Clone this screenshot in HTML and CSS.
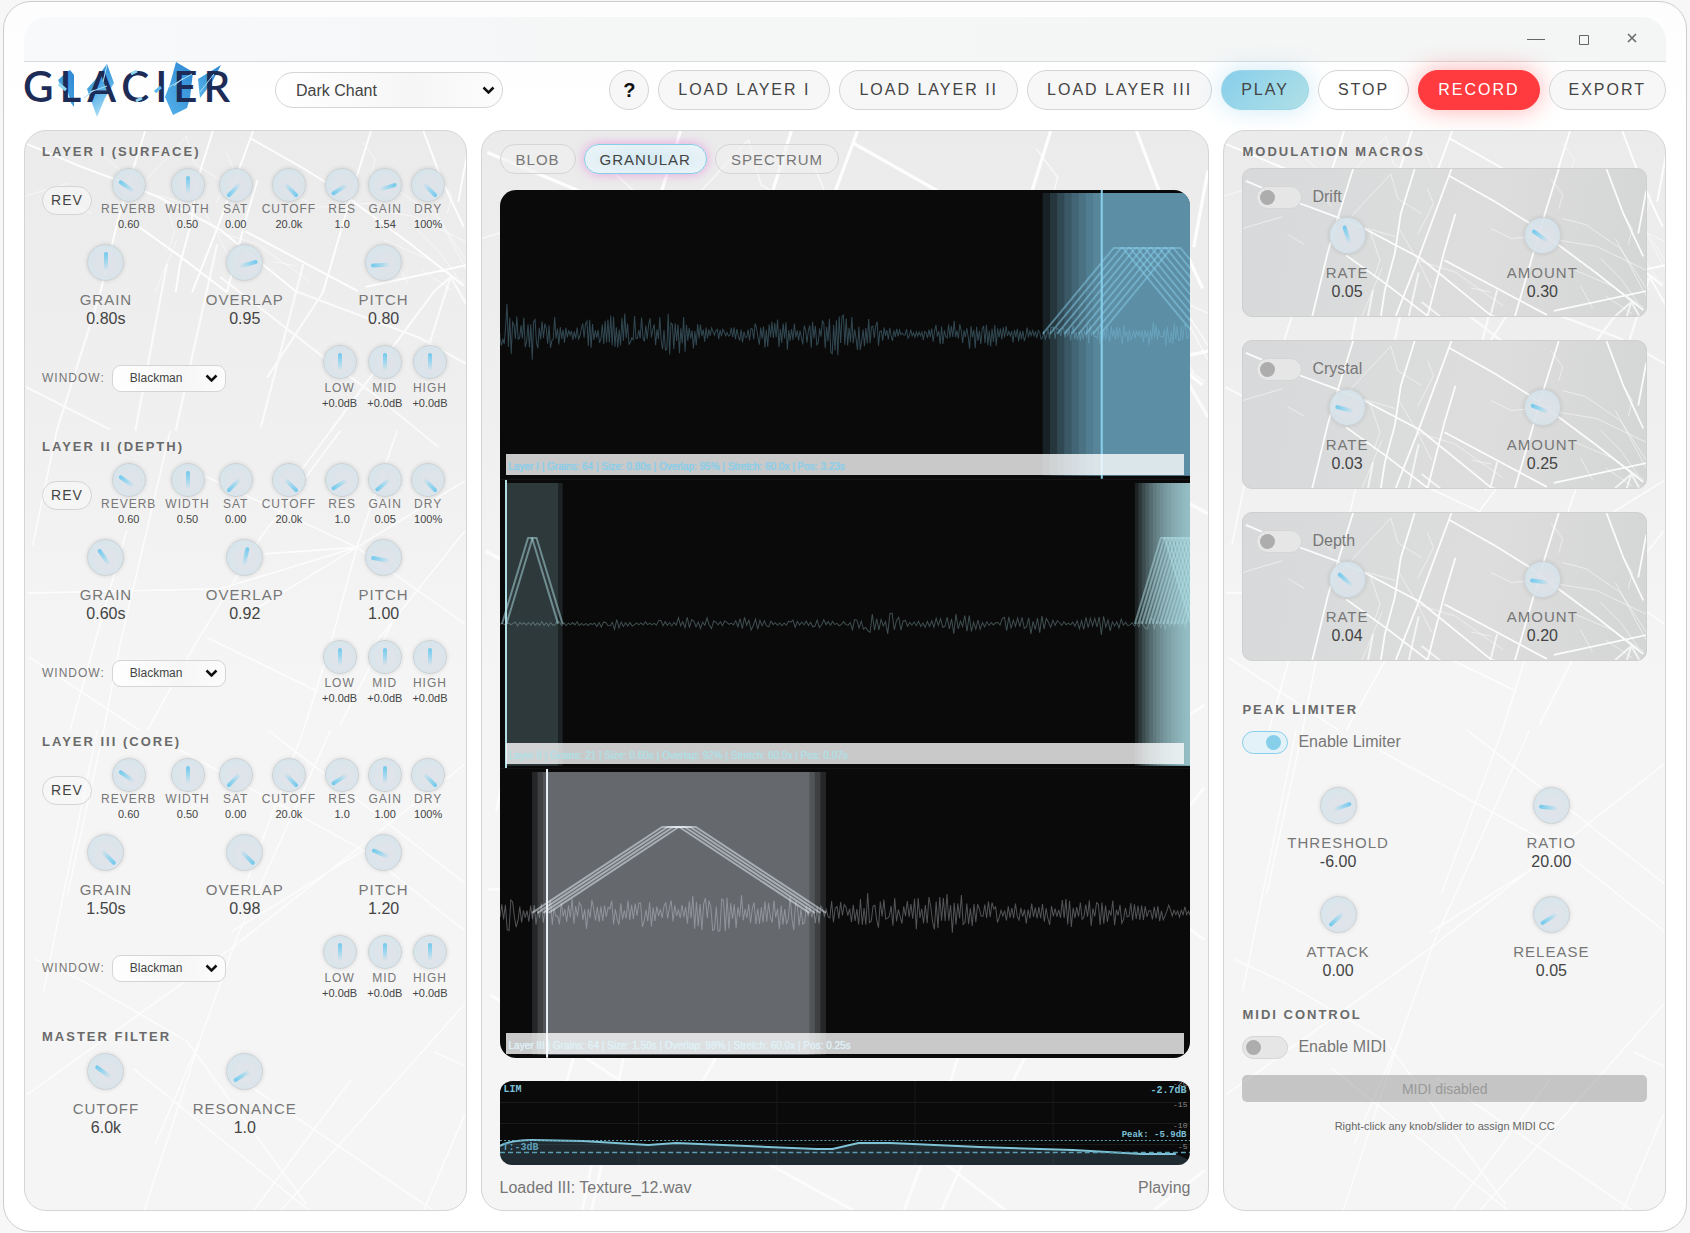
FILE: index.html
```html
<!DOCTYPE html>
<html lang="en">
<head>
<meta charset="utf-8">
<title>Glacier</title>
<meta name="viewport" content="width=device-width, initial-scale=1">
<link rel="stylesheet" href="styles.css">
</head>
<body>
<div class="window">
  <div class="titlebar">
    <button type="button" aria-label="Minimize"><svg width="20" height="14" viewBox="0 0 20 14"><path d="M1 7.500H19"/></svg></button>
    <button type="button" aria-label="Maximize"><svg width="20" height="14" viewBox="0 0 20 14"><path d="M5.500 3.500h9v9h-9z"/></svg></button>
    <button type="button" aria-label="Close"><svg width="20" height="14" viewBox="0 0 20 14"><path stroke-width="1.500" d="M6 2l8 8M14 2l-8 8"/></svg></button>
  </div>

  <header class="toolbar">
    <svg class="logo" width="206" height="56" viewBox="0 0 206 56" role="img" aria-label="Glacier">
      <defs>
        <linearGradient id="shard" x1="0" y1="0" x2="0.300" y2="1"><stop offset="0" stop-color="#2f86cc"/><stop offset="0.500" stop-color="#4aa6e2"/><stop offset="1" stop-color="#a5dcf6"/></linearGradient>
        <linearGradient id="shard2" x1="1" y1="0" x2="0" y2="1"><stop offset="0" stop-color="#2c86d2"/><stop offset="1" stop-color="#56b2ea"/></linearGradient>
      </defs>
      <path fill="url(#shard2)" d="M34 18 43 10 46 8 50 13V45L47 41 44 30 38 26Z"/>
      <path fill="url(#shard)" d="M83 2 90 21 81 36 73 55 63 27 71 18Z"/>
      <path fill="url(#shard2)" d="M152 0 169 10 166 36 163 46 149 53 141 35 146 22Z"/>
      <path fill="url(#shard2)" d="M174 17 197 3 187 22 176 36Z"/>
      <text class="logo-text" x="-1" y="40">GLACIER</text>
      <g fill="none" stroke-linecap="butt">
        <path stroke="#8fd6f3" stroke-width="3" d="M35 22 42 28M107 12 113 9M112 39 118 36"/>
        <path stroke="#5cb8ea" stroke-width="3" d="M131 30 137 25"/>
        <path stroke="#a9e0f8" stroke-width="1" d="M66 30 83 24M83 3 79 20M145 25 168 12M150 24 159 16M176 30 190 12M60 36 70 28"/>
      </g>
    </svg>
    <select class="preset" aria-label="Preset"><option>Dark Chant</option></select>
    <div class="actions">
      <button type="button" class="pill help">?</button>
      <button type="button" class="pill">LOAD LAYER I</button>
      <button type="button" class="pill">LOAD LAYER II</button>
      <button type="button" class="pill">LOAD LAYER III</button>
      <button type="button" class="pill play">PLAY</button>
      <button type="button" class="pill stop">STOP</button>
      <button type="button" class="pill record">RECORD</button>
      <button type="button" class="pill">EXPORT</button>
    </div>
  </header>

  <main class="panels">
    <div class="panel controls">
      <section class="layer">
        <h2>LAYER I (SURFACE)</h2>
        <div class="strip">
          <button type="button" class="rev">REV</button>
          <label class="dial small"><span class="knob" style="--turn:-55deg"><input type="range"></span><span class="name">REVERB</span><span class="value">0.60</span></label>
          <label class="dial small"><span class="knob" style="--turn:0deg"><input type="range"></span><span class="name">WIDTH</span><span class="value">0.50</span></label>
          <label class="dial small"><span class="knob" style="--turn:-135deg"><input type="range"></span><span class="name">SAT</span><span class="value">0.00</span></label>
          <label class="dial small"><span class="knob" style="--turn:135deg"><input type="range"></span><span class="name">CUTOFF</span><span class="value">20.0k</span></label>
          <label class="dial small"><span class="knob" style="--turn:-122deg"><input type="range"></span><span class="name">RES</span><span class="value">1.0</span></label>
          <label class="dial small"><span class="knob" style="--turn:73deg"><input type="range"></span><span class="name">GAIN</span><span class="value">1.54</span></label>
          <label class="dial small"><span class="knob" style="--turn:135deg"><input type="range"></span><span class="name">DRY</span><span class="value">100%</span></label>
        </div>
        <div class="trio">
          <label class="dial"><span class="knob" style="--turn:0deg"><input type="range"></span><span class="name">GRAIN</span><span class="value">0.80s</span></label>
          <label class="dial"><span class="knob" style="--turn:74deg"><input type="range"></span><span class="name">OVERLAP</span><span class="value">0.95</span></label>
          <label class="dial"><span class="knob" style="--turn:-92deg"><input type="range"></span><span class="name">PITCH</span><span class="value">0.80</span></label>
        </div>
        <div class="shape">
          <label class="caption" for="win1">WINDOW:</label>
          <select id="win1" class="mini"><option>Blackman</option></select>
          <div class="eq">
            <label class="dial small"><span class="knob" style="--turn:0deg"><input type="range"></span><span class="name">LOW</span><span class="value">+0.0dB</span></label>
            <label class="dial small"><span class="knob" style="--turn:0deg"><input type="range"></span><span class="name">MID</span><span class="value">+0.0dB</span></label>
            <label class="dial small"><span class="knob" style="--turn:0deg"><input type="range"></span><span class="name">HIGH</span><span class="value">+0.0dB</span></label>
          </div>
        </div>
      </section>

      <section class="layer">
        <h2>LAYER II (DEPTH)</h2>
        <div class="strip">
          <button type="button" class="rev">REV</button>
          <label class="dial small"><span class="knob" style="--turn:-55deg"><input type="range"></span><span class="name">REVERB</span><span class="value">0.60</span></label>
          <label class="dial small"><span class="knob" style="--turn:0deg"><input type="range"></span><span class="name">WIDTH</span><span class="value">0.50</span></label>
          <label class="dial small"><span class="knob" style="--turn:-135deg"><input type="range"></span><span class="name">SAT</span><span class="value">0.00</span></label>
          <label class="dial small"><span class="knob" style="--turn:135deg"><input type="range"></span><span class="name">CUTOFF</span><span class="value">20.0k</span></label>
          <label class="dial small"><span class="knob" style="--turn:-122deg"><input type="range"></span><span class="name">RES</span><span class="value">1.0</span></label>
          <label class="dial small"><span class="knob" style="--turn:-130deg"><input type="range"></span><span class="name">GAIN</span><span class="value">0.05</span></label>
          <label class="dial small"><span class="knob" style="--turn:135deg"><input type="range"></span><span class="name">DRY</span><span class="value">100%</span></label>
        </div>
        <div class="trio">
          <label class="dial"><span class="knob" style="--turn:-35deg"><input type="range"></span><span class="name">GRAIN</span><span class="value">0.60s</span></label>
          <label class="dial"><span class="knob" style="--turn:12deg"><input type="range"></span><span class="name">OVERLAP</span><span class="value">0.92</span></label>
          <label class="dial"><span class="knob" style="--turn:-80deg"><input type="range"></span><span class="name">PITCH</span><span class="value">1.00</span></label>
        </div>
        <div class="shape">
          <label class="caption" for="win2">WINDOW:</label>
          <select id="win2" class="mini"><option>Blackman</option></select>
          <div class="eq">
            <label class="dial small"><span class="knob" style="--turn:0deg"><input type="range"></span><span class="name">LOW</span><span class="value">+0.0dB</span></label>
            <label class="dial small"><span class="knob" style="--turn:0deg"><input type="range"></span><span class="name">MID</span><span class="value">+0.0dB</span></label>
            <label class="dial small"><span class="knob" style="--turn:0deg"><input type="range"></span><span class="name">HIGH</span><span class="value">+0.0dB</span></label>
          </div>
        </div>
      </section>

      <section class="layer">
        <h2>LAYER III (CORE)</h2>
        <div class="strip">
          <button type="button" class="rev">REV</button>
          <label class="dial small"><span class="knob" style="--turn:-55deg"><input type="range"></span><span class="name">REVERB</span><span class="value">0.60</span></label>
          <label class="dial small"><span class="knob" style="--turn:0deg"><input type="range"></span><span class="name">WIDTH</span><span class="value">0.50</span></label>
          <label class="dial small"><span class="knob" style="--turn:-135deg"><input type="range"></span><span class="name">SAT</span><span class="value">0.00</span></label>
          <label class="dial small"><span class="knob" style="--turn:135deg"><input type="range"></span><span class="name">CUTOFF</span><span class="value">20.0k</span></label>
          <label class="dial small"><span class="knob" style="--turn:-122deg"><input type="range"></span><span class="name">RES</span><span class="value">1.0</span></label>
          <label class="dial small"><span class="knob" style="--turn:0deg"><input type="range"></span><span class="name">GAIN</span><span class="value">1.00</span></label>
          <label class="dial small"><span class="knob" style="--turn:135deg"><input type="range"></span><span class="name">DRY</span><span class="value">100%</span></label>
        </div>
        <div class="trio">
          <label class="dial"><span class="knob" style="--turn:135deg"><input type="range"></span><span class="name">GRAIN</span><span class="value">1.50s</span></label>
          <label class="dial"><span class="knob" style="--turn:135deg"><input type="range"></span><span class="name">OVERLAP</span><span class="value">0.98</span></label>
          <label class="dial"><span class="knob" style="--turn:-67deg"><input type="range"></span><span class="name">PITCH</span><span class="value">1.20</span></label>
        </div>
        <div class="shape">
          <label class="caption" for="win3">WINDOW:</label>
          <select id="win3" class="mini"><option>Blackman</option></select>
          <div class="eq">
            <label class="dial small"><span class="knob" style="--turn:0deg"><input type="range"></span><span class="name">LOW</span><span class="value">+0.0dB</span></label>
            <label class="dial small"><span class="knob" style="--turn:0deg"><input type="range"></span><span class="name">MID</span><span class="value">+0.0dB</span></label>
            <label class="dial small"><span class="knob" style="--turn:0deg"><input type="range"></span><span class="name">HIGH</span><span class="value">+0.0dB</span></label>
          </div>
        </div>
      </section>

      <section class="master">
        <h2>MASTER FILTER</h2>
        <div class="trio">
          <label class="dial"><span class="knob" style="--turn:-53deg"><input type="range"></span><span class="name">CUTOFF</span><span class="value">6.0k</span></label>
          <label class="dial"><span class="knob" style="--turn:-122deg"><input type="range"></span><span class="name">RESONANCE</span><span class="value">1.0</span></label>
        </div>
      </section>
    </div>

    <div class="panel stage">
      <nav class="tabs" aria-label="View">
        <button type="button">BLOB</button>
        <button type="button" class="active">GRANULAR</button>
        <button type="button">SPECTRUM</button>
      </nav>
      <div class="viewer">
        <div class="lane sky">
          <svg viewBox="0 0 690 289" preserveAspectRatio="none" data-lane="0"></svg>
          <p>Layer I | Grains: 64 | Size: 0.80s | Overlap: 95% | Stretch: 60.0x | Pos: 3.23s</p>
        </div>
        <div class="lane powder">
          <svg viewBox="0 0 690 289" preserveAspectRatio="none" data-lane="1"></svg>
          <p>Layer II | Grains: 21 | Size: 0.60s | Overlap: 92% | Stretch: 60.0x | Pos: 0.07s</p>
        </div>
        <div class="lane frost">
          <svg viewBox="0 0 690 289" preserveAspectRatio="none" data-lane="2"></svg>
          <p>Layer III | Grains: 64 | Size: 1.50s | Overlap: 98% | Stretch: 60.0x | Pos: 0.25s</p>
        </div>
      </div>
      <div class="meter">
        <svg viewBox="0 0 690 84" preserveAspectRatio="none">
          <g stroke="#191919"><path d="M138.500 0V84M276.500 0V84M414.500 0V84M552.500 0V84M0 21.500H690M0 42.500H690M0 63.500H690"/></g>
          <path fill="#87ceeb" fill-opacity="0.170" d="M0 65Q10 59 32 59L83 60 148 64 176 62 316 68H332L358 62 390 62 479 66 572 69 641 73 675 73 690 80V84H0Z"/>
          <path fill="none" stroke="#7fc4d6" stroke-width="2" d="M0 65Q10 59 32 59L83 60 148 64 176 62 316 68H332L358 62 390 62 479 66 572 69 641 73 675 73"/>
          <path stroke="#5fa3bb" stroke-dasharray="2 2" d="M0 59.500H690"/>
          <path stroke="#5b9db5" stroke-width="1.500" stroke-dasharray="5 3" d="M0 71.500H690"/>
        </svg>
        <span class="tag lim">LIM</span>
        <span class="tag gain">-2.7dB</span>
        <span class="tag peak">Peak: -5.9dB</span>
        <span class="tag thr">T:-3dB</span>
        <div class="scale"><span>-20</span><span>-15</span><span>-10</span><span>-5</span></div>
      </div>
      <footer class="status"><span>Loaded III: Texture_12.wav</span><span>Playing</span></footer>
    </div>

    <div class="panel side">
      <section class="macros">
        <h2>MODULATION MACROS</h2>
        <div class="card">
          <label class="switch"><input type="checkbox">Drift</label>
          <div class="pair">
            <label class="dial"><span class="knob" style="--turn:-18deg"><input type="range"></span><span class="name">RATE</span><span class="value">0.05</span></label>
            <label class="dial"><span class="knob" style="--turn:-55deg"><input type="range"></span><span class="name">AMOUNT</span><span class="value">0.30</span></label>
          </div>
        </div>
        <div class="card">
          <label class="switch"><input type="checkbox">Crystal</label>
          <div class="pair">
            <label class="dial"><span class="knob" style="--turn:-75deg"><input type="range"></span><span class="name">RATE</span><span class="value">0.03</span></label>
            <label class="dial"><span class="knob" style="--turn:-68deg"><input type="range"></span><span class="name">AMOUNT</span><span class="value">0.25</span></label>
          </div>
        </div>
        <div class="card">
          <label class="switch"><input type="checkbox">Depth</label>
          <div class="pair">
            <label class="dial"><span class="knob" style="--turn:-48deg"><input type="range"></span><span class="name">RATE</span><span class="value">0.04</span></label>
            <label class="dial"><span class="knob" style="--turn:-82deg"><input type="range"></span><span class="name">AMOUNT</span><span class="value">0.20</span></label>
          </div>
        </div>
      </section>
      <section class="limiter">
        <h2>PEAK LIMITER</h2>
        <label class="switch"><input type="checkbox" checked>Enable Limiter</label>
        <div class="pair wide">
          <label class="dial"><span class="knob" style="--turn:70deg"><input type="range"></span><span class="name">THRESHOLD</span><span class="value">-6.00</span></label>
          <label class="dial"><span class="knob" style="--turn:-83deg"><input type="range"></span><span class="name">RATIO</span><span class="value">20.00</span></label>
          <label class="dial"><span class="knob" style="--turn:-133deg"><input type="range"></span><span class="name">ATTACK</span><span class="value">0.00</span></label>
          <label class="dial"><span class="knob" style="--turn:-122deg"><input type="range"></span><span class="name">RELEASE</span><span class="value">0.05</span></label>
        </div>
      </section>
      <section class="midi">
        <h2>MIDI CONTROL</h2>
        <label class="switch"><input type="checkbox">Enable MIDI</label>
        <button type="button" class="midi-state" disabled>MIDI disabled</button>
        <p class="hint">Right-click any knob/slider to assign MIDI CC</p>
      </section>
    </div>
  </main>
</div>
<script src="script.js"></script>
</body>
</html>
```
FILE: styles.css
```css
:root {
  --line: #d3d5d6;
  --ink: #444;
  --soft: #777;
  --sky: #87ceeb;
  --chevron: url("data:image/svg+xml,%3Csvg xmlns='http://www.w3.org/2000/svg' width='13' height='8' viewBox='0 0 13 8'%3E%3Cpath d='M1.500 1.500 6.500 6.500 11.500 1.500' fill='none' stroke='%23111' stroke-width='2.500'/%3E%3C/svg%3E");
  --ice: url("data:image/svg+xml,%3Csvg xmlns='http://www.w3.org/2000/svg' viewBox='0 0 406 990' fill='none' stroke='%23fff'%3E%3Cg stroke-width='1.800' stroke-opacity='.9'%3E%3Cpath d='M3 12 53 33 96 49 126 62 179 90 249 147M111 0 96 48 86 82 70 148M173 0 159 45 153 85 143 122 139 148M210 0 176 92 154 148M208 7 254 33 286 53 356 105 403 142M318 0 304 45 274 148M366 0 383 45 403 88M406 22 398 65M214 45 203 82 186 148M104 87 143 115 186 148M203 92 306 147M313 143 406 123'/%3E%3C/g%3E%3Cg stroke-width='.8' stroke-opacity='.65'%3E%3Cpath d='M149 5 109 48M319 72 356 78 406 102M119 58 153 68M140 100 120 148M149 5 156 30 180 45M186 20 192 35 176 66M70 20 90 38M0 60 40 48M45 66 62 76M250 60 270 70 320 66M322 50 345 56 380 80 406 120M360 90 380 110 398 135M330 100 372 118 404 140M128 62 138 92 132 110M156 58 176 92 190 120M176 92 214 104 262 138M230 120 250 124M310 10 322 26 318 40M383 45 392 60 388 76M375 70 406 128M365 128 392 146M340 118 352 140'/%3E%3C/g%3E%3Cg stroke-width='2' stroke-opacity='.7'%3E%3Cpath d='M70 148 30 275M131 122 102 275M177 104 139 275M256 122 217 272M391 134 376 147 281 275M180 134 275 208 320 241M249 147 363 190 406 214M2 235 79 274M391 134 370 200M274 148 223 226M391 134 406 160'/%3E%3C/g%3E%3Cg stroke-width='1.500' stroke-opacity='.75'%3E%3Cpath d='M143 306 305 382 404 452M342 275 305 382 281 471 256 550M404 321 305 382 180 420 3 424M290 275 217 373 155 474 113 550M134 275 88 471 73 550M94 367 42 550M5 483 106 550M168 465 269 514M404 367 321 471M320 241 380 290M281 275 240 330M30 275 8 380M305 382 220 388M305 382 210 440M343 440 290 545'/%3E%3C/g%3E%3Cg stroke-width='1.500' stroke-opacity='.7'%3E%3Cpath d='M143 568 311 660 404 734M404 581 195 746 3 884M281 550 195 740 162 832 110 991M10 760 54 780 149 835 259 985M100 860 262 991M195 868 376 991M404 801 235 991M404 902 366 991M67 550 18 789M224 550 340 640 404 690M256 550 200 700M311 660 190 735M162 832 120 930M376 845 404 858M300 870 210 991M73 550 40 700'/%3E%3C/g%3E%3C/svg%3E");
}

* { box-sizing: border-box; }

body {
  margin: 0;
  padding: 1px 3px;
  min-height: 100vh;
  display: flex;
  background: #f7f7f7;
  color: var(--ink);
  font-family: "Liberation Sans", Arial, sans-serif;
  font-size: 16px;
}

button, select, input { font: inherit; color: inherit; margin: 0; }
h2, p { margin: 0; }

.window {
  flex: 1;
  display: flex;
  flex-direction: column;
  padding: 15px 20px 20px;
  border: 1px solid #cdcdcd;
  border-radius: 28px;
  background: linear-gradient(#fdfdfd, #fff 120px);
}

.titlebar {
  display: flex;
  justify-content: flex-end;
  height: 45px;
  padding-right: 10px;
  border-bottom: 1px solid #d8dbdc;
  border-radius: 24px 24px 0 0;
  background: linear-gradient(90deg, #f7f9fb, #f5f6f6 40%, #f4f5f5);
}
.titlebar button {
  display: grid;
  place-items: center;
  width: 48px;
  padding: 0;
  border: 0;
  background: none;
}
.titlebar svg { fill: none; stroke: #666; }

.toolbar {
  display: flex;
  align-items: center;
  gap: 45px;
  padding-bottom: 12px;
}
.logo { flex: none; overflow: visible; }
.logo-text {
  font-family: Lato, sans-serif;
  font-weight: 600;
  font-size: 42px;
  letter-spacing: 6px;
  fill: #1d2b57;
}

select {
  appearance: none;
  border: 1px solid var(--line);
  background: var(--chevron) right 7px center no-repeat, linear-gradient(90deg, #fff, #f6f6f6 60%, #fcfcfc);
}
.preset {
  width: 228px;
  height: 36px;
  padding: 0 20px;
  border-radius: 18px;
}

.actions { display: flex; gap: 9px; margin-left: auto; }
.pill {
  height: 40px;
  padding: 0 19px;
  border: 1px solid var(--line);
  border-radius: 20px;
  background: #f7f7f7;
  letter-spacing: 2px;
  white-space: nowrap;
}
.help {
  width: 40px;
  padding: 0;
  font-size: 20px;
  font-weight: 700;
  letter-spacing: 0;
  color: #111;
}
.play {
  border-color: #9dd6e8;
  background: linear-gradient(135deg, #87ceeb, #b0e0e6);
  box-shadow: 0 0 24px rgba(135, 206, 235, 0.4);
}
.stop { background: #fff; }
.record {
  border-color: #ff3b40;
  background: #ff3b40;
  color: #fff;
  box-shadow: 0 0 24px rgba(255, 59, 64, 0.4);
}

.panels {
  flex: 1;
  display: grid;
  grid-template-columns: 17fr 28fr 17fr;
  gap: 14px;
}
.panel {
  min-width: 0;
  padding: 13px 18px 12px;
  border: 1px solid var(--line);
  border-radius: 22px;
  background: var(--ice) top / cover, linear-gradient(#ebebeb, #f0f0f0 30%, #f5f5f5 50%);
}
.controls { padding-left: 17px; }

h2 {
  font-size: 13px;
  line-height: 15px;
  letter-spacing: 2px;
  color: #6a6a6a;
  white-space: nowrap;
}

/* Rotary controls */
.dial {
  display: flex;
  flex-direction: column;
  align-items: center;
}
.knob {
  position: relative;
  width: 37px;
  height: 37px;
  margin-bottom: 9px;
  border: 1px solid #cdd1d4;
  border-radius: 50%;
  background: radial-gradient(circle at 55% 55%, rgba(221, 226, 233, 0.9) 30%, rgba(206, 228, 236, 0.9));
  box-shadow: 0 0 4px rgba(0, 0, 0, 0.12);
}
.knob::after {
  content: "";
  position: absolute;
  left: 16px;
  top: 7px;
  width: 4px;
  height: 19px;
  border-radius: 2px;
  background: linear-gradient(#72c8ec, #9ad6ee 45%, rgba(176, 224, 240, 0));
  transform: rotate(var(--turn));
  transform-origin: 50% 13px;
}
.knob input {
  position: absolute;
  inset: 0;
  width: 100%;
  height: 100%;
  opacity: 0;
}
.name { font-size: 15px; line-height: 19px; letter-spacing: 1px; color: var(--soft); }
.value { line-height: 20px; }

.small .knob { width: 34px; height: 34px; margin-bottom: 0; }
.small .knob::after { left: 14px; height: 18px; transform-origin: 50% 12px; }
.small .name, .caption { font-size: 12px; line-height: 15px; letter-spacing: 1px; color: var(--soft); }
.small .value { font-size: 11px; line-height: 15px; }

.layer { margin-bottom: 28px; }
.strip { display: flex; align-items: center; gap: 9px; margin-top: 9px; }
.rev {
  width: 50px;
  height: 29px;
  padding: 0;
  border: 1px solid var(--line);
  border-radius: 15px;
  background: rgba(250, 250, 250, 0.5);
  font-size: 14px;
  letter-spacing: 1px;
}
.trio {
  display: grid;
  grid-template-columns: repeat(3, 1fr);
  column-gap: 11px;
  margin-top: 12px;
}
.master .trio { margin-top: 9px; }
.shape { display: flex; align-items: center; margin-top: 16px; }
.mini {
  width: 114px;
  height: 27px;
  margin-left: 7px;
  padding: 0 17px;
  border-radius: 9px;
  font-size: 12px;
}
.eq { display: flex; gap: 10px; margin-left: auto; }
.eq .knob { margin-bottom: 2px; }

/* Centre stage */
.stage { display: flex; flex-direction: column; }
.tabs { display: flex; gap: 8px; }
.tabs button {
  height: 30px;
  padding: 0 15px;
  border: 1px solid var(--line);
  border-radius: 15px;
  background: rgba(240, 240, 240, 0.6);
  font-size: 15px;
  letter-spacing: 1px;
  color: var(--soft);
}
.tabs .active {
  border-color: var(--sky);
  background: radial-gradient(#d3eaf2, #eef5f8);
  box-shadow: 0 0 11px rgba(226, 130, 220, 0.7);
  color: var(--ink);
}

.viewer {
  flex: 1;
  display: flex;
  flex-direction: column;
  min-height: 600px;
  margin-top: 16px;
  border-radius: 16px;
  overflow: hidden;
  background: #0a0a0a;
}
.lane { position: relative; flex: 1; border-bottom: 1px solid #151515; }
.lane:last-child { border-bottom: 0; }
.lane svg { position: absolute; width: 100%; height: 100%; }
.lane path { fill: none; vector-effect: non-scaling-stroke; }
.lane .band { fill: var(--tone); fill-opacity: 0.12; }
.lane .wave { stroke: var(--tone); stroke-opacity: 0.32; }
.lane .grain { stroke: var(--tone); stroke-opacity: 0.5; stroke-width: 2px; }
.lane .head { stroke: var(--tone); stroke-width: 2px; }
.lane p {
  position: absolute;
  left: 6px;
  right: 6px;
  bottom: 4px;
  height: 21px;
  padding-left: 3px;
  background: rgba(255, 255, 255, 0.78);
  font-size: 10px;
  line-height: 25px;
  color: var(--tone);
  text-shadow: 0 0 1px;
  white-space: nowrap;
}
.sky { --tone: #87ceeb; }
.powder { --tone: #b0e0e6; }
.frost { --tone: #ecf4fc; }
.frost p { color: #dff2f8; }

.meter {
  position: relative;
  height: 84px;
  margin-top: 23px;
  border-radius: 12px;
  overflow: hidden;
  background: #0a0a0a;
  font-family: "Liberation Mono", monospace;
}
.meter svg { position: absolute; width: 100%; height: 100%; }
.tag {
  position: absolute;
  font-size: 10px;
  line-height: 12px;
  font-weight: 700;
  color: #7cc0d8;
}
.lim { left: 4px; top: 3px; }
.gain { right: 4px; top: 4px; }
.peak { right: 4px; top: 48px; font-size: 9px; }
.thr { left: 3px; top: 61px; color: #5d9fb6; }
.scale {
  position: absolute;
  right: 3px;
  top: -8px;
  display: grid;
  font-size: 8px;
  line-height: 21px;
  text-align: right;
  color: #8a8a8a;
}

.status {
  display: flex;
  justify-content: space-between;
  margin-top: 13px;
  line-height: 20px;
  color: var(--soft);
}

/* Right column */
.card {
  margin-top: 23px;
  padding: 17px 13px 14px;
  border: 1px solid #cfcfcf;
  border-radius: 10px;
  background: var(--ice) top / cover, linear-gradient(100deg, #d7d9da, #dddddd 60%, #d4d5d5);
}
h2 + .card { margin-top: 9px; }
.pair {
  display: grid;
  grid-template-columns: 1fr 1fr;
  gap: 24px 14px;
  margin-top: 9px;
}
.pair.wide { column-gap: 22px; margin-top: 34px; }

.switch {
  display: flex;
  align-items: center;
  gap: 10px;
  height: 22px;
  color: var(--soft);
}
.switch input {
  appearance: none;
  width: 46px;
  height: 23px;
  padding: 3px;
  border: 1px solid var(--line);
  border-radius: 12px;
  background: #e6e6e6;
}
.switch input::before {
  content: "";
  display: block;
  width: 15px;
  height: 15px;
  border-radius: 50%;
  background: #adadad;
}
.switch input:checked {
  border-color: var(--sky);
  background: #e3f2f8;
}
.switch input:checked::before { margin-left: 20px; background: var(--sky); }

.limiter { margin-top: 41px; }
.midi { margin-top: 26px; }
.limiter .switch, .midi .switch { margin-top: 14px; }
.midi-state {
  width: 100%;
  height: 27px;
  margin-top: 17px;
  border: 0;
  border-radius: 5px;
  background: rgba(150, 150, 150, 0.5);
  font-size: 14px;
  color: #999;
}
.hint {
  margin-top: 17px;
  font-size: 11px;
  line-height: 15px;
  text-align: center;
  color: #666;
}
```
FILE: script.js
```js
// Draws the granular view: one waveform, its grain windows and a playhead per layer.
const MID = 144;
const TOP = 58;

const lanes = [
  {
    seed: 7, head: 601, rise: 71, flat: 9, step: 1.4,
    starts: run(542, 9, 7.2),
    envelope: [[0, 16], [6, 32], [20, 18], [34, 32], [45, 14], [52, 20], [70, 6], [100, 19], [122, 22], [150, 16], [180, 24], [195, 14], [215, 5], [240, 10], [285, 17], [320, 13], [342, 28], [370, 16], [400, 4], [430, 7], [450, 16], [485, 14], [520, 8], [560, 7], [600, 12], [650, 12], [690, 14]]
  },
  {
    seed: 21, head: 6, rise: 26, flat: 4, step: 2.2,
    starts: run(2, 2, 4.5).concat(run(634, 15, 3.6)),
    envelope: [[0, 2], [50, 3], [90, 2], [118, 6], [150, 2], [180, 7], [205, 7], [230, 3], [250, 8], [275, 2], [310, 6], [340, 2], [365, 10], [395, 11], [410, 2], [440, 8], [465, 12], [490, 2], [515, 11], [540, 12], [560, 2], [600, 12], [625, 5], [690, 8]]
  },
  {
    seed: 42, head: 47, rise: 130, flat: 17, step: 1.8,
    starts: run(32, 4, 5.5),
    envelope: [[0, 14], [10, 22], [22, 10], [60, 15], [80, 17], [120, 12], [165, 16], [180, 12], [205, 23], [235, 20], [260, 12], [290, 19], [320, 13], [350, 10], [370, 26], [385, 14], [430, 18], [445, 23], [480, 12], [520, 10], [565, 15], [610, 13], [650, 9], [690, 7]]
  }
];

function run(from, count, gap) {
  return Array.from({ length: count }, (_, i) => from + i * gap);
}

function random(seed) {
  return () => {
    seed = (seed * 1664525 + 1013904223) % 4294967296;
    return seed / 4294967296;
  };
}

function level(points, x) {
  const i = Math.max(1, points.findIndex(p => p[0] >= x));
  const [x0, y0] = points[i - 1];
  const [x1, y1] = points[i];
  return y0 + (y1 - y0) * (x - x0) / (x1 - x0);
}

function waveform(lane) {
  const next = random(lane.seed);
  let d = `M0 ${MID}`;
  let sign = 1;
  for (let x = 0; x < 690; x += lane.step) {
    const swing = level(lane.envelope, x) * (0.2 + 0.8 * Math.pow(next(), 1.5));
    d += `L${x.toFixed(1)} ${(MID + sign * swing).toFixed(1)}`;
    sign = next() < 0.85 ? -sign : sign;
  }
  return d;
}

document.querySelectorAll("[data-lane]").forEach(svg => {
  const lane = lanes[svg.dataset.lane];
  const width = lane.rise * 2 + lane.flat;
  const bands = lane.starts.map(s => {
    const left = Math.max(6, s);
    const right = Math.min(690, s + width);
    return `<path class="band" d="M${left} 3H${right}V286H${left}Z"/>`;
  });
  const grains = lane.starts.map(s =>
    `<path class="grain" d="M${s} ${MID}L${s + lane.rise} ${TOP}h${lane.flat}L${s + width} ${MID}"/>`);
  svg.innerHTML = bands.join("") +
    `<path class="wave" d="${waveform(lane)}"/>` +
    grains.join("") +
    `<path class="head" d="M${lane.head} 0V289"/>`;
});
```
